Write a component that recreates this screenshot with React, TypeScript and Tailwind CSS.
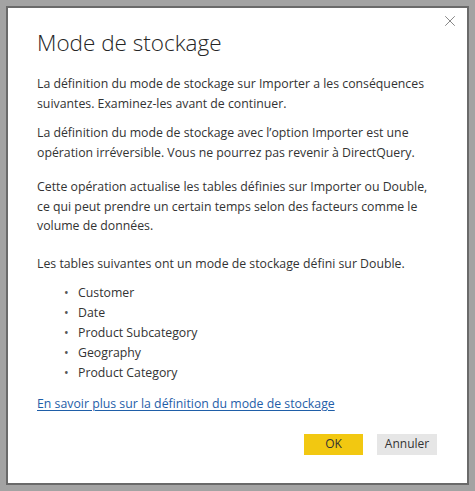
import { X } from "lucide-react";

const tables = ["Customer", "Date", "Product Subcategory", "Geography", "Product Category"];

export default function App() {
  return (
    <div className="w-[475px] h-[491px] bg-[#a3a3a3] p-[6px] font-['Open_Sans',sans-serif] text-[#333333]">
      <div className="relative h-full bg-white border-2 border-[#6a6a6a] pl-[29px] pr-[30px] pt-[20px]">
        <button className="absolute right-[8px] top-[4px] text-[#6e6e6e]">
          <X size={18} strokeWidth={1.1} />
        </button>
        <h1 className="text-[22.5px] font-light leading-[30px] text-[#252525]">Mode de stockage</h1>

        <div className="mt-[16px] text-[12.3px] leading-[19.5px]">
          <p>
            La définition du mode de stockage sur Importer a les conséquences suivantes. Examinez-les avant de
            continuer.
          </p>
          <p className="mt-[10px]">
            La définition du mode de stockage avec l’option Importer est une opération irréversible. Vous ne
            pourrez pas revenir à DirectQuery.
          </p>
          <p className="mt-[15px]">
            Cette opération actualise les tables définies sur Importer ou Double, ce qui peut prendre un certain
            temps selon des facteurs comme le volume de données.
          </p>
          <p className="mt-[18px]">Les tables suivantes ont un mode de stockage défini sur Double.</p>
          <ul className="mt-[10px] pl-[27px]">
            {tables.map((t) => (
              <li key={t} className="flex leading-[20px]">
                <span className="w-[14px] text-[#555]">•</span>
                <span>{t}</span>
              </li>
            ))}
          </ul>
          <a href="#" className="block mt-[11px] text-[#1f5ea8] underline underline-offset-2">
            En savoir plus sur la définition du mode de stockage
          </a>
        </div>

        <div className="flex justify-end gap-[14px] mt-[20px]">
          <button className="w-[59px] h-[21px] bg-[#f2c811] text-[12px] text-[#333]">OK</button>
          <button className="w-[60px] h-[21px] bg-[#e6e6e6] text-[12px] text-[#333]">Annuler</button>
        </div>
      </div>
    </div>
  );
}
